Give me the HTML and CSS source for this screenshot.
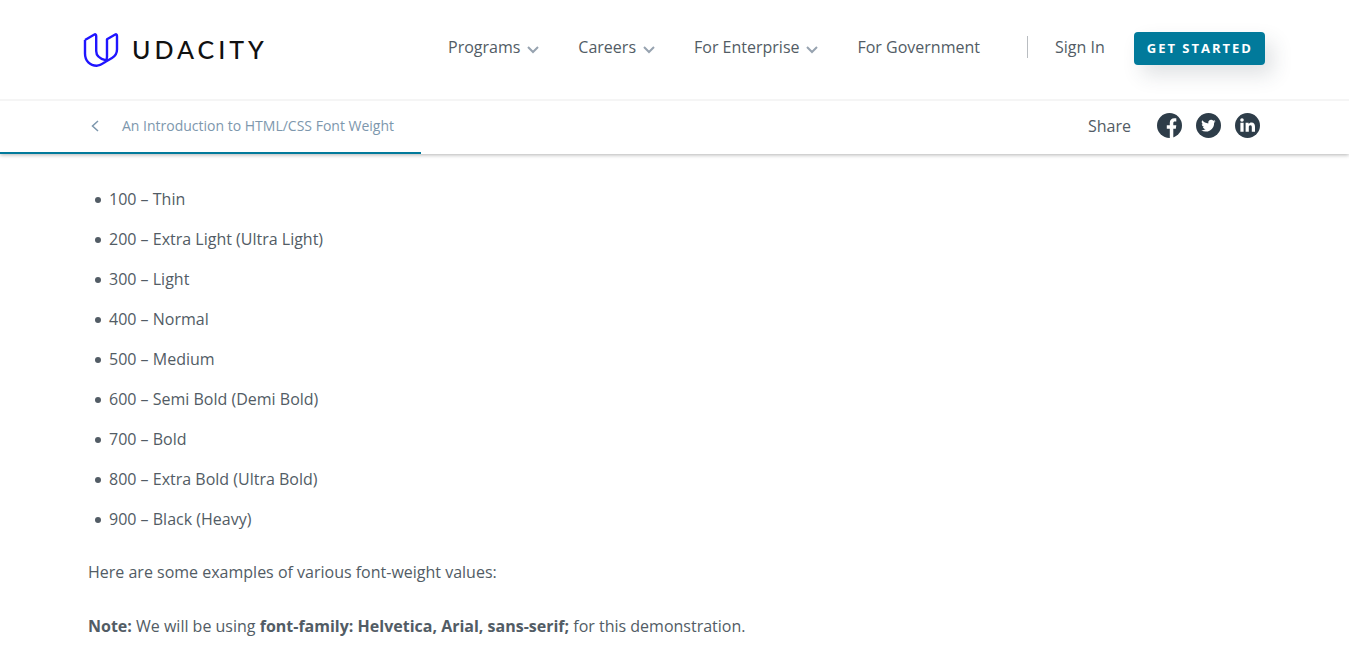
FILE: index.html
```html
<!DOCTYPE html>
<html lang="en">
<head>
<meta charset="utf-8">
<meta name="viewport" content="width=device-width, initial-scale=1">
<title>An Introduction to HTML/CSS Font Weight | Udacity</title>
<link rel="stylesheet" href="styles.css">
</head>
<body>
<header class="site-header">
  <a class="logo" href="#">
    <svg class="logo-mark" viewBox="0 0 34 34" aria-hidden="true">
      <path d="M1 7 L10 1.7 Q12.2 .5 12.2 3 V18 Q12.2 24.8 21.5 27.2 M1 7 V20.5 C1 28 6 32.7 12.7 32.7 C16 32.7 18.5 30.8 21.5 28.8 L28 25 Q33 22 33 16.5 V3 Q33 .5 30.8 1.7 L23 6.2 V24 C23 26.5 22.2 28.2 20.8 29.4 M23 26.8 L21.5 27.2"/>
    </svg>
    <span class="logo-text">UDACITY</span>
  </a>
  <nav class="main-nav">
    <a class="nav-link" href="#">Programs <svg class="chevron" viewBox="0 0 12 8" aria-hidden="true"><path d="M1 1 L6 6 L11 1"/></svg></a>
    <a class="nav-link" href="#">Careers <svg class="chevron" viewBox="0 0 12 8" aria-hidden="true"><path d="M1 1 L6 6 L11 1"/></svg></a>
    <a class="nav-link" href="#">For Enterprise <svg class="chevron" viewBox="0 0 12 8" aria-hidden="true"><path d="M1 1 L6 6 L11 1"/></svg></a>
    <a class="nav-link" href="#">For Government</a>
  </nav>
  <div class="account">
    <a class="nav-link" href="#">Sign In</a>
  </div>
  <button class="cta" type="button">Get Started</button>
</header>
<div class="article-bar">
  <a class="back" href="#">
    <svg class="back-icon" viewBox="0 0 8 12" aria-hidden="true"><path d="M7 1 L1.5 6 L7 11"/></svg>
    <span>An Introduction to HTML/CSS Font Weight</span>
  </a>
  <div class="share">
    <span class="share-label">Share</span>
    <a class="social" href="#" aria-label="Share on Facebook">
      <svg viewBox="0 0 25 25"><circle cx="12.5" cy="12.5" r="12.5"/><path d="M12.8 25 V15.8 H9.8 V12.2 H12.8 V9.8 C12.8 6.8 14.7 5.2 17.3 5.2 H19.3 V8.6 H17.9 C16.7 8.6 16.3 9.2 16.3 10.2 V12.2 H19.3 L18.8 15.8 H16.3 V25 Z"/></svg>
    </a>
    <a class="social" href="#" aria-label="Share on Twitter">
      <svg viewBox="0 0 25 25"><circle cx="12.5" cy="12.5" r="12.5"/><path transform="translate(5.4 5.2) scale(.6)" d="M23.6 4.9c-.9.4-1.8.7-2.8.8 1-.6 1.8-1.6 2.2-2.7-1 .6-2 1-3.1 1.2a4.9 4.9 0 0 0-8.4 4.5C7.4 8.5 3.8 6.6 1.4 3.6a4.9 4.9 0 0 0 1.5 6.6c-.8 0-1.6-.2-2.2-.6 0 2.3 1.6 4.4 3.9 4.9-.7.2-1.5.2-2.2.1.6 2 2.4 3.4 4.6 3.4A9.9 9.9 0 0 1-.3 20a14 14 0 0 0 21.5-12.5c1-.7 1.8-1.6 2.4-2.6Z"/></svg>
    </a>
    <a class="social" href="#" aria-label="Share on LinkedIn">
      <svg viewBox="0 0 25 25"><circle cx="12.5" cy="12.5" r="12.5"/><path d="M5.4 9.8 H8.6 V18.8 H5.4 Z M7 5.2 A1.8 1.8 0 1 1 7 8.8 A1.8 1.8 0 1 1 7 5.2 Z M10.6 9.8 H13.6 V11.1 C14.2 10.1 15.2 9.5 16.5 9.5 C19 9.5 20 11.2 20 13.8 V18.8 H16.8 V14.3 C16.8 13 16.5 12.2 15.4 12.2 C14.2 12.2 13.8 13.1 13.8 14.3 V18.8 H10.6 Z"/></svg>
    </a>
  </div>
  <div class="progress"></div>
</div>
<main class="article">
  <ul class="weights">
    <li>100 – Thin</li>
    <li>200 – Extra Light (Ultra Light)</li>
    <li>300 – Light</li>
    <li>400 – Normal</li>
    <li>500 – Medium</li>
    <li>600 – Semi Bold (Demi Bold)</li>
    <li>700 – Bold</li>
    <li>800 – Extra Bold (Ultra Bold)</li>
    <li>900 – Black (Heavy)</li>
  </ul>
  <p>Here are some examples of various font-weight values:</p>
  <p><strong>Note:</strong> We will be using <strong>font-family: Helvetica, Arial, sans-serif;</strong> for this demonstration.</p>
</main>
</body>
</html>
```
FILE: styles.css
```css
* { box-sizing: border-box; }
body {
  margin: 0;
  background: #fff;
  color: #525c65;
  font: 16px/24px "Open Sans", "Noto Sans", sans-serif;
}
a { color: inherit; text-decoration: none; }

.site-header {
  display: flex;
  align-items: flex-start;
  padding: 32px 84px;
  border-bottom: 2px solid #f5f5f5;
}
.logo {
  display: flex;
  align-items: center;
  gap: 14px;
  margin-right: auto;
  color: #111;
}
.logo-mark {
  width: 34px;
  height: 34px;
  margin-top: 1px;
  fill: none;
  stroke: #2015ff;
  stroke-width: 2.4;
  stroke-linejoin: round;
  overflow: visible;
}
.logo-text {
  font: 500 25px/35px Lato, sans-serif;
  letter-spacing: 4px;
}
.main-nav {
  display: flex;
  gap: 39px;
  padding: 3px 47px 0 0;
}
.nav-link {
  display: flex;
  align-items: center;
  gap: 7px;
}
.chevron {
  width: 12px;
  height: 8px;
  margin-top: 5px;
  fill: none;
  stroke: #97a3b0;
  stroke-width: 2;
}
.account {
  margin-top: 4px;
  padding-left: 27px;
  border-left: 1px solid #b9bdc1;
  line-height: 22px;
}
.cta {
  margin-left: 29px;
  padding: 0 12px 0 13px;
  border: 0;
  border-radius: 4px;
  background: #017a9b;
  box-shadow: 8px 10px 20px rgba(46, 61, 73, .15);
  color: #fff;
  font: 700 13px/33px "Open Sans", sans-serif;
  letter-spacing: 2px;
  text-transform: uppercase;
}

.article-bar {
  position: relative;
  display: flex;
  align-items: center;
  justify-content: space-between;
  padding: 12px 89px 16px 91px;
  box-shadow: 0 1px 4px rgba(0, 0, 0, .3);
  clip-path: inset(0 0 -8px 0);
}
.back {
  display: flex;
  align-items: center;
  gap: 23px;
  color: #7d97ad;
  font-size: 14px;
}
.back-icon {
  width: 8px;
  height: 12px;
  fill: none;
  stroke: #7d97ad;
  stroke-width: 1.5;
}
.share { display: flex; align-items: center; gap: 14px; }
.share-label { margin-right: 12px; }
.social { width: 25px; height: 25px; }
.social svg { display: block; fill: #2e3d49; }
.social path { fill: #fff; }
.progress {
  position: absolute;
  left: 0;
  bottom: 0;
  width: 31.2%;
  height: 2px;
  background: #017a9b;
}

.article { padding: 33px 88px 0; }
.weights { margin: 0 0 29px; padding-left: 7px; list-style: none; }
.weights li {
  display: flex;
  align-items: center;
  gap: 8px;
  margin-bottom: 16px;
}
.weights li::before {
  content: "";
  width: 6px;
  height: 6px;
  margin-top: 2px;
  border-radius: 50%;
  background: currentColor;
}
.weights li:last-child { margin-bottom: 0; }
.article p { margin: 0 0 30px; }
```
